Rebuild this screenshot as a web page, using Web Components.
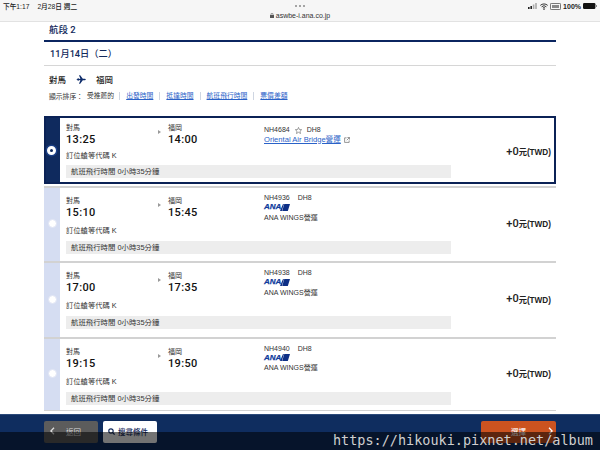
<!DOCTYPE html>
<html lang="zh-Hant">
<head>
<meta charset="utf-8">
<title>航段 2</title>
<style>
	html, body { margin: 0; padding: 0; background: #fff; }
	body {
		width: 600px;
		height: 450px;
		overflow: hidden;
		position: relative;
		display: flex;
		flex-direction: column;
		font-family: "Liberation Sans", "Noto Sans CJK TC", sans-serif;
		color: #222;
	}
</style>
</head>
<body>
<ios-bar></ios-bar>
<segment-head></segment-head>
<flight-list>
	<flight-card selected dep="13:25" arr="14:00" no="NH4684" star>
		<a slot="operator">Oriental Air Bridge營運</a>
	</flight-card>
	<flight-card dep="15:10" arr="15:45" no="NH4936" logo>
		<span slot="operator">ANA WINGS營運</span>
	</flight-card>
	<flight-card dep="17:00" arr="17:35" no="NH4938" logo>
		<span slot="operator">ANA WINGS營運</span>
	</flight-card>
	<flight-card dep="19:15" arr="19:50" no="NH4940" logo>
		<span slot="operator">ANA WINGS營運</span>
	</flight-card>
</flight-list>
<bottom-bar></bottom-bar>
<water-mark>https://hikouki.pixnet.net/album</water-mark>

<script>
const CJK = `"Liberation Sans", "Noto Sans CJK TC", sans-serif`;
const HEAD = `Roboto, "Noto Sans CJK TC", sans-serif`;

class IosBar extends HTMLElement {
	connectedCallback() {
		this.attachShadow({ mode: "open" }).innerHTML = `
			<style>
				:host {
					display: block;
					flex: none;
					background: #f6f6f6;
					border-bottom: 1px solid #e2e2e2;
					box-sizing: border-box;
					height: 22px;
					font: 7px ${CJK};
					color: #222;
				}
				.row { display: grid; grid-template-columns: 1fr auto 1fr; padding: 0 3px; height: 12px; align-items: center; }
				.left { display: flex; gap: 8px; font-weight: 500; font-size: 6.7px; }
				.right { display: flex; gap: 2px; align-items: center; justify-content: flex-end; font-weight: 700; }
				.dots { display: flex; gap: 2px; justify-content: center; }
				.dots i { width: 2px; height: 2px; border-radius: 50%; background: #888; }
				.url { display: flex; gap: 2px; align-items: center; justify-content: center; font-size: 7px; color: #333; height: 7px; }
				svg { display: block; }
			</style>
			<div class="row">
				<div class="left"><span>下午1:17</span><span>2月28日 週二</span></div>
				<div class="dots"><i></i><i></i><i></i></div>
				<div class="right">
					<svg width="10" height="6" viewBox="0 0 10 6"><rect x="0" y="4" width="1.6" height="2" fill="#222"/><rect x="2.4" y="3" width="1.6" height="3" fill="#222"/><rect x="4.8" y="1.5" width="1.6" height="4.5" fill="#aaa"/><rect x="7.2" y="0" width="1.6" height="6" fill="#aaa"/></svg>
					<svg width="8" height="7" viewBox="0 0 8 7"><path d="M.3 2.4a5.4 5.4 0 0 1 7.4 0M1.6 3.8a3.5 3.5 0 0 1 4.8 0M2.9 5.1a1.6 1.6 0 0 1 2.2 0" fill="none" stroke="#222" stroke-width=".9"/><circle cx="4" cy="6.2" r=".7" fill="#222"/></svg>
					<svg width="11" height="7" viewBox="0 0 11 7"><rect x=".4" y=".4" width="10.2" height="6.2" rx="1" fill="none" stroke="#444" stroke-width=".8"/><rect x="2" y="2" width="7" height="3" fill="#888"/></svg>
					<span>100%</span>
					<svg width="14" height="6" viewBox="0 0 14 6"><rect x="0" y="0" width="12.4" height="6" rx="1.2" fill="#111"/><rect x="13" y="2" width="1" height="2" fill="#888"/></svg>
				</div>
			</div>
			<div class="url">
				<svg width="4" height="5" viewBox="0 0 4 5"><rect x="0" y="2" width="4" height="3" fill="#555"/><path d="M1 2V1.2a1 1 0 0 1 2 0V2" fill="none" stroke="#555" stroke-width=".6"/></svg>
				<span>aswbe-i.ana.co.jp</span>
			</div>
		`;
	}
}

class SegmentHead extends HTMLElement {
	connectedCallback() {
		this.attachShadow({ mode: "open" }).innerHTML = `
			<style>
				:host {
					display: block;
					flex: none;
					margin: 0 44px;
					font-family: ${CJK};
				}
				h2 {
					margin: 0;
					height: 20px;
					box-sizing: border-box;
					border-bottom: 2px solid #0b2560;
					padding-left: 5px;
					font: 500 9.5px/16px ${HEAD};
					color: #12295c;
				}
				.date {
					height: 24px;
					box-sizing: border-box;
					border-bottom: 1px solid #d6d6d6;
					padding-left: 6px;
					font: 500 9.2px/23px ${HEAD};
					color: #12295c;
				}
				.route {
					display: flex;
					align-items: center;
					height: 14px;
					margin-top: 6px;
					padding-left: 5px;
					font-size: 8.5px;
					font-weight: 500;
					color: #222;
				}
				.route svg { margin: 0 10px 0 10px; }
				.sort {
					display: flex;
					align-items: center;
					height: 10px;
					margin-top: 5px;
					padding-left: 5px;
					font-size: 6.8px;
					color: #333;
				}
				.sort a { color: #2a62c8; text-decoration: underline; }
				.sort a { padding: 0 6px; border-left: 1px solid #cfd6e2; line-height: 8px; }
				.sort .cur { padding: 0 5px 0 4px; line-height: 8px; }
			</style>
			<h2>航段 2</h2>
			<div class="date">11月14日（二）</div>
			<div class="route">
				<span>對馬</span>
				<svg width="10" height="9" viewBox="0 0 10 9"><path d="M.2 4.5 1.4 4.1 2 2.9l.7 0L2.5 3.9 4.4 3.8 3 .2h1.2L6.8 3.7l2 .1c.6.1 1 .4 1 .7s-.4.6-1 .7l-2 .1L4.2 8.8H3L4.4 5.2 2.5 5.1 2.7 6.1 2 6.1 1.4 4.9z" fill="#0f2d6b"/></svg>
				<span>福岡</span>
			</div>
			<div class="sort">
				<span>顯示排序：</span><span class="cur">受推薦的</span>
				<a>出發時間</a><a>抵達時間</a><a>航班飛行時間</a><a>票價差額</a>
			</div>
		`;
	}
}

class FlightList extends HTMLElement {
	connectedCallback() {
		this.attachShadow({ mode: "open" }).innerHTML = `
			<style>
				:host {
					display: flex;
					flex-direction: column;
					flex: none;
					margin: 15px 44px 0 44px;
				}
			</style>
			<slot></slot>
		`;
	}
}

class AnaLogo extends HTMLElement {
	connectedCallback() {
		this.attachShadow({ mode: "open" }).innerHTML = `
			<style>
				:host { display: inline-flex; align-items: center; height: 8px; }
				b {
					font: italic 900 8px/8px "Liberation Sans", sans-serif;
					color: #0d3a9c;
					-webkit-text-stroke: .25px #0d3a9c;
				}
				svg { display: block; margin-left: -1px; }
			</style>
			<b>ANA</b>
			<svg width="10" height="7" viewBox="0 0 10 7"><path d="M3 0H10L7.8 7H0z" fill="#0d2f86"/><path d="M3.9 0h.4L2.2 7h-.4z" fill="#fff"/></svg>
		`;
	}
}

class FlightCard extends HTMLElement {
	connectedCallback() {
		const sel = this.hasAttribute("selected");
		const dep = this.getAttribute("dep");
		const arr = this.getAttribute("arr");
		const no = this.getAttribute("no");
		const star = this.hasAttribute("star") ? `
			<svg class="star" width="7" height="7" viewBox="0 0 7 7"><path d="M3.5.4 4.4 2.5 6.7 2.7 5 4.2 5.5 6.5 3.5 5.3 1.5 6.5 2 4.2.3 2.7 2.6 2.5z" fill="none" stroke="#777" stroke-width=".7"/></svg>` : "";
		const logo = this.hasAttribute("logo") ? `<ana-logo></ana-logo>` : "";
		const ext = sel ? `
			<svg class="ext" width="6" height="6" viewBox="0 0 7 7"><path d="M3 1H.7v5.3H6V4M4 .6h2.4V3M6.2.8 3.2 3.8" fill="none" stroke="#666" stroke-width=".8"/></svg>` : "";
		this.attachShadow({ mode: "open" }).innerHTML = `
			<style>
				:host {
					display: flex;
					box-sizing: border-box;
					font: 7px ${CJK};
					color: #333;
					height: 75.4px;
					border-top: 2px solid #d2d2d2;
				}
				:host([selected]) {
					height: 68px;
					border: 2px solid #0b2256;
					margin-bottom: 2px;
				}
				:host(:last-child) { border-bottom: 1px solid #d2d2d2; height: 74.5px; }
				.rail {
					flex: none;
					width: 16px;
					background: #d5ddf2;
					display: flex;
					align-items: center;
					justify-content: center;
					padding-bottom: 2px;
					box-sizing: border-box;
				}
				:host([selected]) .rail { width: 14px; background: #0f2a5e; padding: 0 3px 0 0; }
				.radio {
					width: 9px;
					height: 9px;
					border-radius: 50%;
					background: #fff;
					box-sizing: border-box;
					border: 1px solid #dfe4f4;
				}
				:host([selected]) .radio { border: 3px solid #fff; background: #0f2a5e; box-shadow: 0 0 0 1.5px #1b3f86; }
				.body { flex: 1; display: flex; min-width: 0; }
				.info { width: 391px; padding: 8px 0 0 6px; box-sizing: border-box; }
				:host([selected]) .info { padding-top: 5px; }
				.top { display: flex; height: 24px; }
				.end { width: 92px; }
				.arrive { width: 96px; }
				.port { line-height: 9px; height: 9px; }
				.time {
					font: 500 11px/13px Roboto, "Liberation Sans", sans-serif;
					letter-spacing: .35px;
					color: #111;
					margin-top: 1px;
				}
				.tri {
					width: 0; height: 0;
					border-left: 3px solid #999;
					border-top: 2px solid transparent;
					border-bottom: 2px solid transparent;
					margin: 7px 7px 0 0;
				}
				.flightno { display: flex; align-items: center; gap: 8px; height: 8px; line-height: 8px; white-space: nowrap; }
				:host([selected]) .flightno { gap: 5px; }
				.flight { line-height: 10px; }
				:host(:not([selected])) .flight { margin-top: -2px; }
				:host([selected]) .flight { margin-top: 3px; }
				.op { height: 11px; display: flex; align-items: center; gap: 3px; white-space: nowrap; margin-top: 1px; }
				:host([selected]) .op { margin-top: 0; }
				::slotted(a) { color: #2a62c8; text-decoration: underline; font-size: 7.6px; }
				.logo { height: 8px; display: flex; margin-top: 1px; }
				.code { line-height: 9px; font-size: 7.3px; margin-top: 6px; }
				:host([selected]) .code { margin-top: 4px; }
				.bar {
					background: #ededed;
					height: 13px;
					line-height: 13px;
					padding-left: 5px;
					margin-top: 6px;
					font-size: 7.4px;
				}
				:host([selected]) .bar { margin-top: 5px; }
				.price {
					flex: 1;
					display: flex;
					align-items: center;
					justify-content: flex-end;
					padding: 0 5px 3px 0;
					font-size: 8.2px;
					font-weight: 700;
					color: #222;
					white-space: nowrap;
				}
				:host([selected]) .price { padding: 2px 3px 0 0; }
				.price b { font: 500 11px Roboto, sans-serif; }
				svg { display: block; }
			</style>
			<div class="rail"><div class="radio"></div></div>
			<div class="body">
				<div class="info">
					<div class="top">
						<div class="end"><div class="port">對馬</div><div class="time">${dep}</div></div>
						<div class="tri"></div>
						<div class="arrive"><div class="port">福岡</div><div class="time">${arr}</div></div>
						<div class="flight">
							<div class="flightno"><span>${no}</span>${star}<span>DH8</span></div>
							${logo ? `<div class="logo">${logo}</div>` : ""}
							<div class="op"><slot name="operator"></slot>${ext}</div>
						</div>
					</div>
					<div class="code">訂位艙等代碼 K</div>
					<div class="bar">航班飛行時間 0小時35分鐘</div>
				</div>
				<div class="price"><b>+0</b>元(TWD)</div>
			</div>
		`;
	}
}

class BottomBar extends HTMLElement {
	connectedCallback() {
		this.attachShadow({ mode: "open" }).innerHTML = `
			<style>
				:host {
					display: flex;
					flex: 1;
					margin-top: 3px;
					background: #0f2d5f;
					border-top: 1px solid #2c4a7a;
					box-sizing: border-box;
					padding: 6px 44px 0 44px;
					gap: 5px;
					font: 7.5px ${CJK};
					align-items: flex-start;
				}
				.btn {
					height: 22px;
					box-sizing: border-box;
					border-radius: 2px;
					display: flex;
					align-items: center;
					padding-bottom: 2px;
					position: relative;
				}
				.back { width: 54px; background: #5c5c5c; color: #ddd; gap: 11px; padding-left: 6px; }
				.search { width: 54px; background: #fff; color: #12295c; font-weight: 500; gap: 3px; padding-left: 5px; }
				.next { width: 75px; margin-left: auto; background: #cc5320; color: #fff; justify-content: center; }
				.next svg { position: absolute; right: 3px; top: 6px; }
				svg { display: block; }
			</style>
			<div class="btn back">
				<svg width="5" height="8" viewBox="0 0 5 8"><path d="M4 .8.9 4 4 7.2" fill="none" stroke="#ddd" stroke-width="1.3"/></svg>
				<span>返回</span>
			</div>
			<div class="btn search">
				<svg width="7" height="7" viewBox="0 0 7 7"><circle cx="3" cy="3" r="2.2" fill="none" stroke="#12295c" stroke-width="1.2"/><path d="M4.6 4.6 6.6 6.6" stroke="#12295c" stroke-width="1.3"/></svg>
				<span>搜尋條件</span>
			</div>
			<div class="btn next">
				<span>選擇</span>
				<svg width="5" height="8" viewBox="0 0 5 8"><path d="M1 .8 4.1 4 1 7.2" fill="none" stroke="#fff" stroke-width="1.3"/></svg>
			</div>
		`;
	}
}

// over the page, so absolute is fine here
class WaterMark extends HTMLElement {
	connectedCallback() {
		this.attachShadow({ mode: "open" }).innerHTML = `
			<style>
				:host {
					position: absolute;
					left: 0;
					right: 0;
					bottom: 0;
					height: 18px;
					background: rgba(0, 0, 0, .55);
					color: #cfcfcf;
					font: 13.5px/17px "DejaVu Sans Mono", monospace;
					text-align: right;
					padding-right: 7px;
					box-sizing: border-box;
				}
			</style>
			<slot></slot>
		`;
	}
}

customElements.define("ios-bar", IosBar);
customElements.define("segment-head", SegmentHead);
customElements.define("flight-list", FlightList);
customElements.define("ana-logo", AnaLogo);
customElements.define("flight-card", FlightCard);
customElements.define("bottom-bar", BottomBar);
customElements.define("water-mark", WaterMark);
</script>
</body>
</html>
